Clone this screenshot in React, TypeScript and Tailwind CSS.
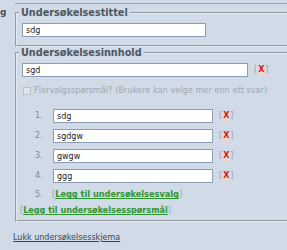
import React from "react";

const RemoveIcon = () => (
  <span className="inline-flex items-center text-[8px] font-bold leading-[10px]">
    <span className="text-[#9aa3ae] font-normal">[</span>
    <span className="bg-[#f3d2d2] px-[1px] text-[#d3141c]">X</span>
    <span className="text-[#9aa3ae] font-normal">]</span>
  </span>
);

const TextBox = ({ value, width }: { value: string; width: string }) => (
  <input
    readOnly
    defaultValue={value}
    className={`${width} h-[14px] border border-[#8a9db5] bg-white pl-[3px] text-[8px] leading-[12px] text-[#222] outline-none font-['DejaVu_Sans',sans-serif]`}
  />
);

const choices = ["sdg", "sgdgw", "gwgw", "ggg"];

export default function App() {
  return (
    <div className="w-[287px] h-[250px] overflow-hidden bg-[#d1dbe7] text-[8px] font-['DejaVu_Sans',Verdana,sans-serif] text-[#3c4654]">
      <div className="flex">
        <div className="w-[15px] shrink-0 pt-[7px] text-[9px] font-bold leading-[11px] text-[#4a5260]">g</div>
        <div className="w-[300px] shrink-0">
          <div className="h-[4px] border-b border-[#9aa6b6]" />

          <fieldset className="mt-[3px] border-2 [border-style:groove] border-[#e3eaf4] pl-[5px] pt-[5px] pb-[8px]">
            <legend className="-ml-[3px] px-[2px] text-[9.7px] font-bold leading-[11px] text-[#4d5663]">
              Undersøkelsestittel
            </legend>
            <TextBox value="sdg" width="w-[184px]" />
          </fieldset>

          <fieldset className="border-2 [border-style:groove] border-[#e3eaf4] pl-[5px] pt-[5px] pb-[4px]">
            <legend className="-ml-[3px] px-[2px] text-[9.7px] font-bold leading-[11px] text-[#4d5663]">
              Undersøkelsesinnhold
            </legend>
            <div className="flex items-center gap-[6px]">
              <TextBox value="sgd" width="w-[226px]" />
              <RemoveIcon />
            </div>

            <div className="mt-[8px] flex h-[11px] items-center gap-[3px] pl-[1px]">
              <span className="h-[8px] w-[8px] border border-[#b7c0cb] bg-[#dde4ec]" />
              <span className="text-[8.2px] text-[#9ea7b2]">
                Flervalgsspørsmål? (Brukere kan velge mer enn ett svar)
              </span>
            </div>

            <ol className="mt-[13px] flex flex-col gap-[6px] pl-[13px]">
              {choices.map((c, i) => (
                <li key={c} className="flex h-[14px] items-center">
                  <span className="w-[18px] text-[#7f8896]">{i + 1}.</span>
                  <TextBox value={c} width="w-[160px]" />
                  <span className="ml-[6px]">
                    <RemoveIcon />
                  </span>
                </li>
              ))}
              <li className="flex h-[11px] items-center">
                <span className="w-[17px] text-[#7f8896]">5.</span>
                <span className="text-[8.2px]">
                  <span className="text-[#9aa3ae]">[</span>
                  <a href="#" className="font-bold text-[#2f962f] underline">
                    Legg til undersøkelsesvalg
                  </a>
                  <span className="text-[#9aa3ae]">]</span>
                </span>
              </li>
            </ol>

            <div className="-ml-[2px] mt-[5px] h-[11px] text-[8.1px] leading-[11px]">
              <span className="text-[#9aa3ae]">[</span>
              <a href="#" className="font-bold text-[#2f962f] underline">
                Legg til undersøkelsesspørsmål
              </a>
              <span className="text-[#9aa3ae]">]</span>
            </div>
          </fieldset>
        </div>
      </div>

      <div className="mt-[10px] pl-[13px] leading-[11px]">
        <a href="#" className="text-[8px] text-[#3c4654] underline">
          Lukk undersøkelsesskjema
        </a>
      </div>
    </div>
  );
}
